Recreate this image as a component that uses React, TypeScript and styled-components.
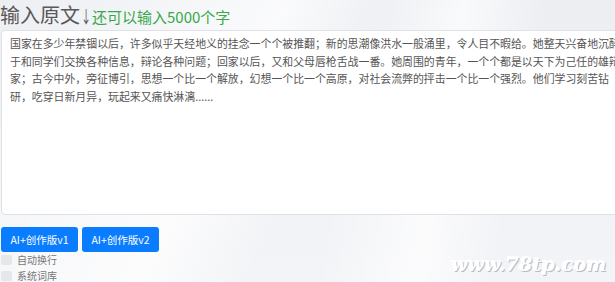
import React from 'react'
import styled, { createGlobalStyle } from 'styled-components'

const GlobalStyle = createGlobalStyle`
  html, body {
    margin: 0;
    padding: 0;
    overflow: hidden;
  }
  body {
    font-family: "Noto Sans CJK SC", "Noto Sans", sans-serif;
    background-color: #eef0f3;
    background-image:
      linear-gradient(118deg, rgba(255,255,255,0) 0%, rgba(255,255,255,0.75) 38%, rgba(255,255,255,0) 52%),
      linear-gradient(100deg, rgba(255,255,255,0) 55%, rgba(255,255,255,0.7) 70%, rgba(255,255,255,0) 82%),
      linear-gradient(180deg, #eceef2 0%, #f3f4f7 100%);
    min-height: 282px;
  }
`

const sampleText =
  '国家在多少年禁锢以后，许多似乎天经地义的挂念一个个被推翻；新的思潮像洪水一般涌里，令人目不暇给。她整天兴奋地沉醉于和同学们交换各种信息，辩论各种问题；回家以后，又和父母唇枪舌战一番。她周围的青年，一个个都是以天下为己任的雄辩家；古今中外，旁征博引，思想一个比一个解放，幻想一个比一个高原，对社会流弊的抨击一个比一个强烈。他们学习刻苦钻研，吃穿日新月异，玩起来又痛快淋漓......'

const App = () => {
  return (
    <Page>
      <GlobalStyle />
      <Header>
        <Title>
          输入原文<Arrow>↓</Arrow>
        </Title>
        <Counter>还可以输入5000个字</Counter>
      </Header>
      <Editor readOnly defaultValue={sampleText} />
      <ButtonRow>
        <ActionButton>AI+创作版v1</ActionButton>
        <ActionButton>AI+创作版v2</ActionButton>
      </ButtonRow>
      <OptionList>
        <Option>
          <CheckBox />
          <OptionLabel>自动换行</OptionLabel>
        </Option>
        <Option>
          <CheckBox />
          <OptionLabel>系统词库</OptionLabel>
        </Option>
      </OptionList>
      <Watermark>www.78tp.com</Watermark>
    </Page>
  )
}

const Page = styled.div`
  position: relative;
  width: 615px;
  height: 282px;
  overflow: hidden;
`

const Header = styled.div`
  display: flex;
  align-items: baseline;
  height: 30px;
  line-height: 30px;
`

const Title = styled.span`
  font-size: 20px;
  color: #595959;
`

const Arrow = styled.span`
  display: inline-block;
  width: 9px;
  font-size: 17px;
  transform: scaleX(0.6);
  transform-origin: left center;
  margin-left: 1px;
`

const Counter = styled.span`
  margin-left: 2px;
  font-size: 15px;
  color: #3aa84a;
`

const Editor = styled.textarea`
  display: block;
  box-sizing: border-box;
  margin: 0 0 0 1px;
  width: 632px;
  height: 185px;
  padding: 4px 8px;
  border: 1px solid #dfe1e5;
  border-radius: 4px;
  background: #ffffff;
  font-family: "Noto Sans CJK SC", "Noto Sans", sans-serif;
  font-size: 10.9px;
  line-height: 17.6px;
  color: #555;
  resize: none;
  outline: none;
  overflow: hidden;
`

const ButtonRow = styled.div`
  display: flex;
  gap: 4px;
  margin: 12px 0 0 1px;
`

const ActionButton = styled.button`
  box-sizing: border-box;
  width: 77px;
  height: 25px;
  padding: 0;
  border: none;
  border-radius: 3px;
  background: #0a7cff;
  color: #ffffff;
  font-family: "Noto Sans CJK SC", "Noto Sans", sans-serif;
  font-size: 10.5px;
  cursor: pointer;
`

const OptionList = styled.div`
  display: flex;
  flex-direction: column;
  margin: 0 0 0 1px;
`

const Option = styled.label`
  display: flex;
  align-items: center;
  gap: 5px;
  height: 16px;
`

const CheckBox = styled.span`
  display: inline-block;
  width: 11px;
  height: 10px;
  border-radius: 2px;
  background: #e6e7eb;
`

const OptionLabel = styled.span`
  font-size: 10px;
  line-height: 14px;
  color: #777;
`

const Watermark = styled.div`
  position: absolute;
  left: 451px;
  top: 253px;
  font-family: "DejaVu Serif", serif;
  font-style: italic;
  font-weight: bold;
  font-size: 19px;
  letter-spacing: 0.2px;
  color: #ffffff;
  text-shadow: 1px 1px 0 #b8bcc4, -1px -1px 0 #ffffff;
  white-space: nowrap;
`

export default App
